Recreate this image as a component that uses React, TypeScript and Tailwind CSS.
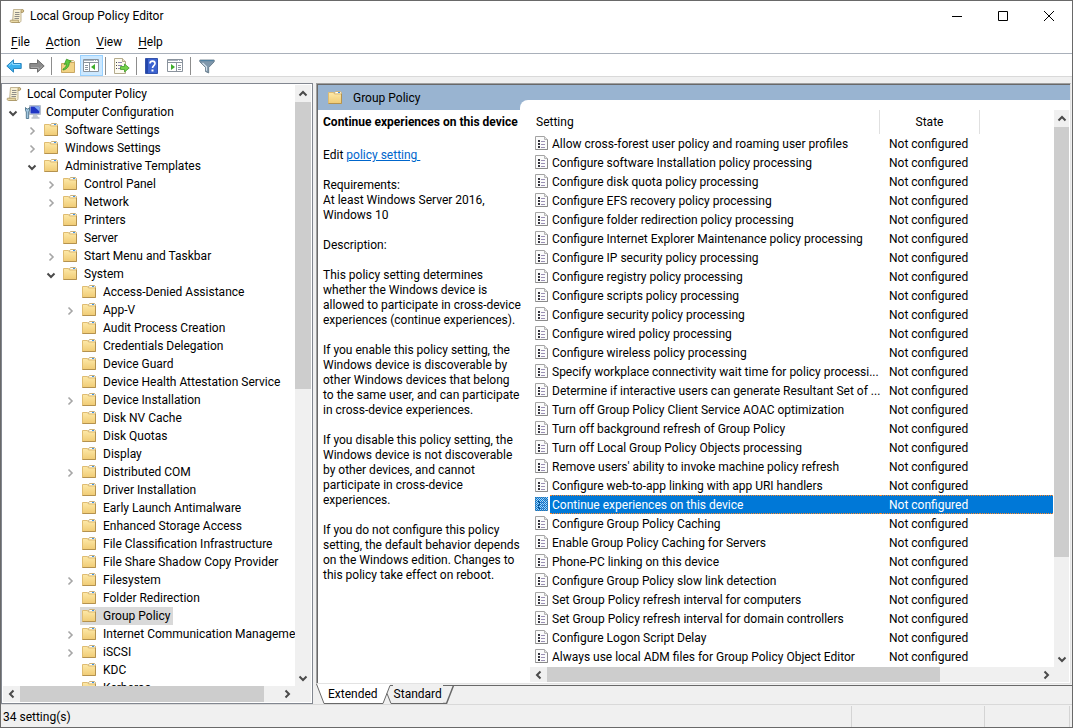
import { useState } from 'react';
import clsx from 'clsx';

type TreeNode = {
  label: string;
  level: 0 | 1 | 2 | 3 | 4;
  icon?: 'scroll' | 'computer';
  state?: 'open' | 'closed';
};

const tree: TreeNode[] = [
  { label: 'Local Computer Policy', level: 0, icon: 'scroll' },
  { label: 'Computer Configuration', level: 1, icon: 'computer', state: 'open' },
  { label: 'Software Settings', level: 2, state: 'closed' },
  { label: 'Windows Settings', level: 2, state: 'closed' },
  { label: 'Administrative Templates', level: 2, state: 'open' },
  { label: 'Control Panel', level: 3, state: 'closed' },
  { label: 'Network', level: 3, state: 'closed' },
  { label: 'Printers', level: 3 },
  { label: 'Server', level: 3 },
  { label: 'Start Menu and Taskbar', level: 3, state: 'closed' },
  { label: 'System', level: 3, state: 'open' },
  { label: 'Access-Denied Assistance', level: 4 },
  { label: 'App-V', level: 4, state: 'closed' },
  { label: 'Audit Process Creation', level: 4 },
  { label: 'Credentials Delegation', level: 4 },
  { label: 'Device Guard', level: 4 },
  { label: 'Device Health Attestation Service', level: 4 },
  { label: 'Device Installation', level: 4, state: 'closed' },
  { label: 'Disk NV Cache', level: 4 },
  { label: 'Disk Quotas', level: 4 },
  { label: 'Display', level: 4 },
  { label: 'Distributed COM', level: 4, state: 'closed' },
  { label: 'Driver Installation', level: 4 },
  { label: 'Early Launch Antimalware', level: 4 },
  { label: 'Enhanced Storage Access', level: 4 },
  { label: 'File Classification Infrastructure', level: 4 },
  { label: 'File Share Shadow Copy Provider', level: 4 },
  { label: 'Filesystem', level: 4, state: 'closed' },
  { label: 'Folder Redirection', level: 4 },
  { label: 'Group Policy', level: 4 },
  { label: 'Internet Communication Management', level: 4, state: 'closed' },
  { label: 'iSCSI', level: 4, state: 'closed' },
  { label: 'KDC', level: 4 },
  { label: 'Kerberos', level: 4 },
];

const settings = [
  'Allow cross-forest user policy and roaming user profiles',
  'Configure software Installation policy processing',
  'Configure disk quota policy processing',
  'Configure EFS recovery policy processing',
  'Configure folder redirection policy processing',
  'Configure Internet Explorer Maintenance policy processing',
  'Configure IP security policy processing',
  'Configure registry policy processing',
  'Configure scripts policy processing',
  'Configure security policy processing',
  'Configure wired policy processing',
  'Configure wireless policy processing',
  'Specify workplace connectivity wait time for policy processi...',
  'Determine if interactive users can generate Resultant Set of ...',
  'Turn off Group Policy Client Service AOAC optimization',
  'Turn off background refresh of Group Policy',
  'Turn off Local Group Policy Objects processing',
  "Remove users' ability to invoke machine policy refresh",
  'Configure web-to-app linking with app URI handlers',
  'Continue experiences on this device',
  'Configure Group Policy Caching',
  'Enable Group Policy Caching for Servers',
  'Phone-PC linking on this device',
  'Configure Group Policy slow link detection',
  'Set Group Policy refresh interval for computers',
  'Set Group Policy refresh interval for domain controllers',
  'Configure Logon Script Delay',
  'Always use local ADM files for Group Policy Object Editor',
];

const description = [
  'This policy setting determines\nwhether the Windows device is\nallowed to participate in cross-device\nexperiences (continue experiences).',
  'If you enable this policy setting, the\nWindows device is discoverable by\nother Windows devices that belong\nto the same user, and can participate\nin cross-device experiences.',
  'If you disable this policy setting, the\nWindows device is not discoverable\nby other devices, and cannot\nparticipate in cross-device\nexperiences.',
  'If you do not configure this policy\nsetting, the default behavior depends\non the Windows edition. Changes to\nthis policy take effect on reboot.',
];

const indent = {
  0: 'pl-px',
  1: 'pl-[3px]',
  2: 'pl-[22px]',
  3: 'pl-[41px]',
  4: 'pl-[60px]',
};

const ScrollIcon = () => (
  <svg width="16" height="16" viewBox="0 0 16 16" className="shrink-0">
    <path d="M4.5 1.5h9c1.3 0 1.6 2.5.2 2.5H12v8.500c0 1.300-.8 2-1.900 2H3.500z" fill="#f7efd2" stroke="#c2b593" />
    <path d="M13.500 1.500c1.600.2 1.500 2.800.1 2.900H12V3c0-.8.6-1.600 1.500-1.500z" fill="#d9c48d" stroke="#a4905f" strokeWidth=".8" />
    <path d="M1.500 12.200h8c-.5 1 .1 2.300 1 2.300h-8c-1.400 0-1.600-1.700-1-2.300z" fill="#ead9a5" stroke="#a4905f" strokeWidth=".8" />
    <path d="M6 4.500h4.500M6 6.500h4.500M5.500 8.500h5M5.500 10.500h4.500" stroke="#8f8d88" />
  </svg>
);

const ComputerIcon = () => (
  <svg width="16" height="16" viewBox="0 0 16 16" className="shrink-0">
    <path d="M4.500 1.500h11v9h-11z" fill="#d6dce4" stroke="#b4becb" />
    <path d="M5.500 2.500h9v7h-9z" fill="#1f35c4" />
    <path d="M9 2.500h5.500v5z" fill="#7fa9f2" />
    <path d="M8 11h4l1.500 2.500h-6z" fill="#c3cad4" />
    <path d="M6.500 13.500h8v1h-8z" fill="#9aa3b0" />
    <path d="M.5 3.500 2 5h1l1.500-1.500v3L3.700 8v6.500H1.300V8L.5 6.500z" fill="#9fc4dd" stroke="#3c647f" strokeWidth=".8" />
  </svg>
);

const FolderIcon = () => (
  <svg width="16" height="16" viewBox="0 0 16 16" className="shrink-0">
    <defs>
      <linearGradient id="folder" x1="0" y1="0" x2="0" y2="1">
        <stop offset="0" stopColor="#fde9a9" />
        <stop offset="1" stopColor="#f0cb74" />
      </linearGradient>
    </defs>
    <path d="M6.500 3.500v-1l1-1h5l1 1v2h-7z" fill="#f3ead0" stroke="#c9b17c" />
    <path d="M8 2.500h2.500" stroke="#fff" />
    <path d="M10 2.500h2" stroke="#3f95e8" />
    <path d="M.5 2.500h5l1 1.500h7v9.500H.5z" fill="url(#folder)" stroke="#dfbc72" />
    <path d="M.5 13.500h13V4" fill="none" stroke="#b4924f" />
  </svg>
);

const SettingIcon = ({ selected }: { selected?: boolean }) => (
  <svg width="13" height="15" viewBox="0 0 13 15" className="shrink-0">
    <path d="M.5.500h9l3 3v10H.5z" fill="#fbfbfb" stroke="#a3a3a3" />
    <path d="M.5 13.500h12v-10" fill="none" stroke="#8a8a8a" />
    <path d="M9.500.500v3h3" fill="#e4e4e4" stroke="#b5b5b5" />
    <path d="M3 4h2v2H3zM3 7h2v2H3zM3 10h2v2H3z" fill="#33333b" />
    <path d="M6 5.500h4M6 8.500h4M6 11.500h4" stroke="#9a90b4" />
    {selected && (
      <>
        <defs>
          <pattern id="dither" width="2" height="2" patternUnits="userSpaceOnUse">
            <path d="M0 0h1v1H0zM1 1h1v1H1z" fill="#0078d7" />
          </pattern>
        </defs>
        <path d="M0 0h13v14H0z" fill="#0078d7" opacity=".3" />
        <path d="M0 0h13v14H0z" fill="url(#dither)" shapeRendering="crispEdges" />
      </>
    )}
  </svg>
);

const ArrowIcon = ({ forward }: { forward?: boolean }) => (
  <svg width="16" height="16" viewBox="0 0 16 16" className={clsx(forward && 'rotate-180')}>
    <path
      d="M.8 8 7.500 1.800v3.700h7.700v5H7.500v3.700z"
      fill={forward ? '#8c8c8c' : '#3bb0ee'}
      stroke={forward ? '#6e6e6e' : '#2b86bf'}
      strokeLinejoin="round"
    />
    <path d="M3 7.500 6.500 4.200v2.300h7.500" fill="none" stroke={forward ? '#a9a9a9' : '#93dbff'} />
  </svg>
);

const FolderUpIcon = () => (
  <svg width="16" height="16" viewBox="0 0 16 16">
    <path d="M8.500 4.500v-2h5l1 1v2" fill="#f7efd5" stroke="#cdb27a" />
    <path d="M1.500 5.500h5l1-1h7v10h-13z" fill="#f2d385" stroke="#c9a763" />
    <path d="M3 11c2.500-1 3.500-3 3.300-5.200l-2 .7L6.500 1.200l4.800 2-2 1C9.500 8 7 11.500 3 12z" fill="#5fca3d" stroke="#3a9624" strokeWidth=".8" />
  </svg>
);

const PanesIcon = ({ flipped }: { flipped?: boolean }) => (
  <svg width="17" height="15" viewBox="0 0 17 15">
    <path d="M.5 1.500h15v12H.5z" fill="#fff" stroke="#8a939d" />
    <path d="M1 2.500h14" stroke="#a9b2bd" />
    <path d="M11 2.500h1M13 2.500h1" stroke="#fff" />
    <path d="M1 4.500h14" stroke="#8a939d" />
    {flipped ? (
      <>
        <path d="M9.500 5v8.500" stroke="#8a939d" />
        <path d="M11 7.500h3M11 9.500h3M11 11.500h3" stroke="#8c95a0" />
        <path d="M4 6v6l4-3z" fill="#3fae2a" />
      </>
    ) : (
      <>
        <path d="M6.500 5v8.500" stroke="#8a939d" />
        <path d="M2 7.500h3M2 9.500h3M2 11.500h3" stroke="#8c95a0" />
        <path d="M12 6v6L8 9z" fill="#3fae2a" />
      </>
    )}
  </svg>
);

const ExportIcon = () => (
  <svg width="17" height="16" viewBox="0 0 17 16">
    <path d="M1.500.500h8l3 3v12h-11z" fill="#fdfbf0" stroke="#b4ab8c" />
    <path d="M9.500.500v3h3" fill="#ece6cd" stroke="#b4ab8c" />
    <path d="M3 4.500h1M3 7.500h1M3 10.500h1" stroke="#444" />
    <path d="M5 4.500h4M5 7.500h4M5 10.500h3" stroke="#8e88b0" />
    <path d="M7.500 8.500h4V6l4.700 4-4.700 4v-2.500h-4z" fill="#74d34b" stroke="#3f9c28" strokeWidth=".8" />
  </svg>
);

const HelpIcon = () => (
  <svg width="14" height="16" viewBox="0 0 14 16">
    <path d="M.500.500h12v15H.500z" fill="#3b62d0" stroke="#3453ab" />
    <path d="M1 1h2v14H1z" fill="#2346ab" />
    <path d="M5 5.500c0-3.200 5-3.200 5 0 0 2-2.500 2.200-2.500 4.500" fill="none" stroke="#fff" strokeWidth="1.600" />
    <path d="M6.500 11.500h2v2h-2z" fill="#fff" />
  </svg>
);

const FilterIcon = () => (
  <svg width="16" height="16" viewBox="0 0 16 16">
    <path d="M.8 2h14.400v1.800L9.700 9.500v5.500l-3.200-1.500v-4L.8 3.800z" fill="#7f97ab" stroke="#5c7182" strokeWidth=".8" />
    <path d="M1.500 2h13v1.200h-13z" fill="#4f7f9f" />
    <path d="M3.500 5 7.500 8.800v4" fill="none" stroke="#d4e0ea" strokeWidth="1.200" />
  </svg>
);

const chevrons = {
  up: 'M1.500 6.500 5 3l3.500 3.500',
  down: 'M1.500 3.500 5 7l3.500-3.500',
  left: 'M6.500 1.500 3 5l3.500 3.500',
  right: 'M3.500 1.500 7 5 3.500 8.500',
};

const Chevron = ({ dir, light }: { dir: keyof typeof chevrons; light?: boolean }) => (
  <svg width="10" height="10" viewBox="0 0 10 10">
    <path d={chevrons[dir]} fill="none" stroke={light ? '#a6a6a6' : '#4a4a4a'} strokeWidth={light ? 1.600 : 2} />
  </svg>
);

const ScrollBar = ({ vertical, size }: { vertical?: boolean; size: number }) => {
  const button = clsx('flex shrink-0 items-center justify-center', vertical ? 'h-[17px] w-full' : 'h-full w-[17px]');

  return (
    <div className={clsx('flex bg-[#f0f0f0]', vertical && 'flex-col')}>
      <button type="button" className={button} aria-label={vertical ? 'Scroll up' : 'Scroll left'}>
        <Chevron dir={vertical ? 'up' : 'left'} />
      </button>
      <div className="min-h-0 min-w-0 flex-1">
        <div
          className={clsx('bg-[#cdcdcd]', vertical ? 'w-full' : 'h-full')}
          style={vertical ? { height: `${size}%` } : { width: `${size}%` }}
        />
      </div>
      <button type="button" className={button} aria-label={vertical ? 'Scroll down' : 'Scroll right'}>
        <Chevron dir={vertical ? 'down' : 'right'} />
      </button>
    </div>
  );
};

const TitleBar = () => (
  <header className="flex h-[30px] shrink-0 items-center pl-2">
    <ScrollIcon />
    <h1 className="ml-[5px] flex-1">Local Group Policy Editor</h1>
    <button type="button" aria-label="Minimize" className="flex h-full w-[46px] items-center justify-center">
      <svg width="10" height="10" viewBox="0 0 10 10">
        <path d="M0 5.500h10" stroke="#000" />
      </svg>
    </button>
    <button type="button" aria-label="Maximize" className="flex h-full w-[46px] items-center justify-center">
      <svg width="10" height="10" viewBox="0 0 10 10">
        <path d="M.500.500h9v9h-9z" fill="none" stroke="#000" />
      </svg>
    </button>
    <button type="button" aria-label="Close" className="flex h-full w-[46px] items-center justify-center">
      <svg width="10" height="10" viewBox="0 0 10 10">
        <path d="M0 0l10 10M10 0 0 10" stroke="#000" />
      </svg>
    </button>
  </header>
);

const MenuBar = () => (
  <nav className="flex h-[23px] shrink-0 items-center gap-4 border-b border-[#a9b0ba] pl-2.5">
    {['File', 'Action', 'View', 'Help'].map((item) => (
      <button key={item} type="button">
        <span className="underline underline-offset-2">{item[0]}</span>
        {item.slice(1)}
      </button>
    ))}
  </nav>
);

const Separator = () => <div className="h-[18px] w-px bg-[#8d8d8d]" />;

const ToolBar = () => (
  <div className="flex h-[23px] shrink-0 items-center border-b border-[#d9d9d9] pt-px pl-[5px]">
    <button type="button" aria-label="Back" className="mr-[7px]">
      <ArrowIcon />
    </button>
    <button type="button" aria-label="Forward" className="mr-1.5">
      <ArrowIcon forward />
    </button>
    <Separator />
    <button type="button" aria-label="Up one level" className="mx-2">
      <FolderUpIcon />
    </button>
    <button
      type="button"
      aria-label="Show or hide console tree"
      className="mr-0.5 -ml-1 flex h-[21px] w-[23px] items-center justify-center border border-[#99d1ff] bg-[#cce8ff]"
    >
      <PanesIcon />
    </button>
    <Separator />
    <button type="button" aria-label="Export list" className="mr-1.5 ml-[7px]">
      <ExportIcon />
    </button>
    <Separator />
    <button type="button" aria-label="Help" className="mx-2">
      <HelpIcon />
    </button>
    <button type="button" aria-label="Show or hide action pane" className="mr-1.5">
      <PanesIcon flipped />
    </button>
    <Separator />
    <button type="button" aria-label="Filter" className="ml-2">
      <FilterIcon />
    </button>
  </div>
);

const TreeRow = ({ node, selected, onSelect }: { node: TreeNode; selected: boolean; onSelect: () => void }) => (
  <li className={clsx('flex h-[18px]', indent[node.level])}>
    {node.level > 0 && (
      <span className="flex w-[17px] shrink-0 items-center pt-0.5 pl-0.5">
        {node.state && <Chevron dir={node.state === 'open' ? 'down' : 'right'} light={node.state === 'closed'} />}
      </span>
    )}
    <button
      type="button"
      onClick={onSelect}
      className={clsx('flex items-center gap-[5px] pr-[3px] pl-0.5 whitespace-nowrap', selected && 'bg-[#d9d9d9]')}
    >
      {node.icon === 'scroll' ? <ScrollIcon /> : node.icon === 'computer' ? <ComputerIcon /> : <FolderIcon />}
      {node.label}
    </button>
  </li>
);

const TreePane = () => {
  const [active, setActive] = useState('Group Policy');

  return (
    <aside className="grid w-[312px] shrink-0 grid-cols-[1fr_16px] grid-rows-[1fr_16px] border border-[#828790] bg-white p-px">
      <ul className="min-h-0 min-w-0 overflow-hidden">
        {tree.map((node) => (
          <TreeRow
            key={node.label}
            node={node}
            selected={active === node.label}
            onSelect={() => setActive(node.label)}
          />
        ))}
      </ul>
      <ScrollBar vertical size={50.6} />
      <ScrollBar size={94.6} />
      <div className="bg-[#f0f0f0]" />
    </aside>
  );
};

const DescriptionPane = () => (
  <section className="w-[212px] shrink-0 overflow-hidden pt-[5px] pl-[5px] leading-[15px] whitespace-pre">
    <h2 className="mb-[18px] font-bold">Continue experiences on this device</h2>
    <p className="mb-[15px]">
      Edit{' '}
      <a href="#policy" className="text-[#0066cc] underline">
        {'policy setting '}
      </a>
    </p>
    <p className="mb-[15px]">{'Requirements:\nAt least Windows Server 2016,\nWindows 10'}</p>
    <p className="mb-[15px]">Description:</p>
    {description.map((text) => (
      <p key={text} className="mb-[15px]">
        {text}
      </p>
    ))}
  </section>
);

const SettingsTable = () => {
  const [active, setActive] = useState(19);

  return (
    <div className="min-h-0 min-w-0 overflow-hidden">
      <table className="w-full table-fixed border-separate border-spacing-0 whitespace-nowrap">
        <colgroup>
          <col className="w-[350px]" />
          <col className="w-[100px]" />
          <col />
        </colgroup>
        <thead>
          <tr className="h-6">
            <th className="border-r border-[#e0e0e0] p-0 pl-1.5 text-left font-normal">Setting</th>
            <th className="border-r border-[#e0e0e0] p-0 font-normal">State</th>
            <th className="p-0" />
          </tr>
        </thead>
        <tbody>
          {settings.map((setting, index) => {
            const selected = index === active;
            const line = selected && 'border-y border-dotted border-[#ff8728] bg-[#0078d7] text-white';

            return (
              <tr key={setting} onClick={() => setActive(index)}>
                <td className="p-0">
                  <div className="flex h-[19px] items-center pl-[5px]">
                    <SettingIcon selected={selected} />
                    <span className={clsx('ml-0.5 flex h-full flex-1 items-center pl-0.5', line)}>{setting}</span>
                  </div>
                </td>
                <td className="p-0">
                  <div className={clsx('flex h-[19px] items-center pl-[9px]', line)}>Not configured</div>
                </td>
                <td className="p-0">
                  <div className={clsx('mr-px h-[19px]', line)} />
                </td>
              </tr>
            );
          })}
        </tbody>
      </table>
    </div>
  );
};

const ViewTabs = () => (
  <div className="flex h-5 shrink-0 items-stretch">
    <svg width="9" height="20" viewBox="0 0 9 20">
      <path d="M.500 0h8.500v19.500H8z" fill="#fff" />
      <path d="M.500 0 8 19.500h1" fill="none" stroke="#696969" />
    </svg>
    <button type="button" className="border-b border-[#696969] bg-white px-[3px]">
      Extended
    </button>
    <svg width="12" height="20" viewBox="0 0 12 20">
      <path d="M0 0h9v1.500L2 19.500H0z" fill="#fff" />
      <path d="M0 19.500h2l7-18h3" fill="none" stroke="#696969" />
      <path d="M6 9.500l4 10h2" fill="none" stroke="#696969" />
    </svg>
    <button type="button" className="border-b border-[#696969] px-px pt-px">
      <span className="block">Standard</span>
    </button>
    <svg width="12" height="20" viewBox="0 0 12 20">
      <path d="M0 19.500h3.500l7-18" fill="none" stroke="#696969" strokeWidth="1.500" />
      <path d="M0 1.500h12" stroke="#696969" />
    </svg>
    <div className="mt-px flex-1 border-t border-[#696969]" />
  </div>
);

const ResultPane = () => (
  <main className="flex min-w-0 flex-1 flex-col">
    <div className="mr-px flex min-h-0 flex-1 flex-col border border-t-[#a0a0a0] border-r-[#e3e3e3] border-b-[#e3e3e3] border-l-[#a0a0a0]">
      <div className="flex min-h-0 flex-1 flex-col border-t border-l border-[#696969] bg-white pb-px">
        <div className="flex h-[25px] shrink-0 items-end bg-[#99b4d1]">
          <div className="flex h-full w-[202px] items-center pl-2.5">
            <FolderIcon />
            <span className="ml-[9px]">Group Policy</span>
          </div>
          <div className="h-2.5 flex-1 rounded-tl-lg bg-white" />
        </div>
        <div className="flex min-h-0 flex-1">
          <DescriptionPane />
          <div className="mr-px grid min-w-0 flex-1 grid-cols-[1fr_15px] grid-rows-[1fr_15px]">
            <SettingsTable />
            <ScrollBar vertical size={82.2} />
            <ScrollBar size={80.2} />
            <div className="bg-[#f0f0f0]" />
          </div>
        </div>
      </div>
    </div>
    <ViewTabs />
  </main>
);

const StatusBar = () => (
  <footer className="flex h-[23px] shrink-0 items-stretch border-t border-[#d9d9d9] pt-px pr-0.5">
    <span className="flex flex-1 items-center pl-0.5">34 setting(s)</span>
    <div className="w-[133px] border-l border-[#d4d4d4]" />
    <div className="w-[86px] border-x border-[#d4d4d4]" />
  </footer>
);

export default function App() {
  return (
    <div className="flex h-screen flex-col overflow-hidden border border-[#696969] bg-white font-[Roboto,sans-serif] text-[12px] leading-4 text-black">
      <TitleBar />
      <MenuBar />
      <ToolBar />
      <div className="flex min-h-0 flex-1 flex-col bg-[#f0f0f0]">
        <div className="flex min-h-0 flex-1 gap-[3px] pt-1.5">
          <TreePane />
          <ResultPane />
        </div>
        <StatusBar />
      </div>
    </div>
  );
}
